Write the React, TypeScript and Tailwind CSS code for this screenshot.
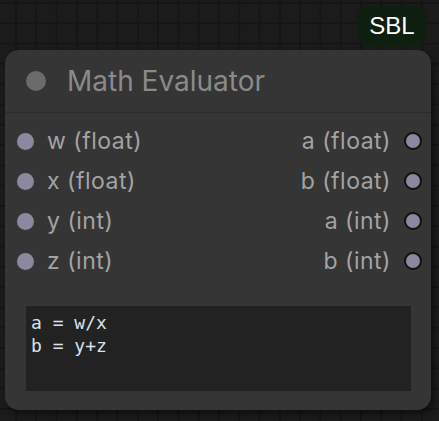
import React from 'react';

const inputs = ['w (float)', 'x (float)', 'y (int)', 'z (int)'];
const outputs = ['a (float)', 'b (float)', 'a (int)', 'b (int)'];

const App = () => {
    return (
        <div className="w-[439px] h-[421px] overflow-hidden flex flex-col pt-[6px] bg-[#1b1b1b] bg-[linear-gradient(to_right,#151515_2px,transparent_2px),linear-gradient(to_bottom,#151515_2px,transparent_2px)] bg-size-[20.3px_20.3px] bg-position-[15px_2px] font-['Inter',sans-serif]">
            {/* Badge */}
            <div className="self-end mr-[13px] w-[68px] h-[40px] rounded-[10px] bg-[#0e1f10] flex items-center justify-center text-white text-[24px] font-['Liberation_Sans',sans-serif]">
                SBL
            </div>

            {/* Node */}
            <div className="mt-[4px] ml-[5px] w-[426px] h-[360px] rounded-[14px] bg-[#353535] shadow-[3px_4px_6px_rgba(0,0,0,0.45)] flex flex-col">
                {/* Header */}
                <div className="h-[63px] border-b border-[#2b2b2b] flex items-center pl-[21px] gap-[21px] shrink-0">
                    <div className="w-[20px] h-[20px] rounded-full bg-[#6b6b6b]"></div>
                    <span className="text-[28px] text-[#8a8a8a] leading-none">Math Evaluator</span>
                </div>

                {/* Sockets */}
                <div className="flex justify-between pt-[8px] pl-[12px] pr-[9px]">
                    <div className="flex flex-col">
                        {inputs.map((label) => (
                            <div key={label} className="h-[40px] flex items-center gap-[13px]">
                                <div className="w-[17px] h-[17px] rounded-full bg-[#8a899f]"></div>
                                <span className="text-[23px] tracking-[0.5px] text-[#a3a3a3] leading-none">{label}</span>
                            </div>
                        ))}
                    </div>
                    <div className="flex flex-col items-end">
                        {outputs.map((label, i) => (
                            <div key={label + i} className="h-[40px] flex items-center gap-[13px]">
                                <span className="text-[23px] tracking-[0.5px] text-[#a3a3a3] leading-none">{label}</span>
                                <div className="w-[18px] h-[18px] rounded-full bg-[#8a899f] border-2 border-[#111111]"></div>
                            </div>
                        ))}
                    </div>
                </div>

                {/* Code */}
                <div className="mt-[25px] mx-[21px] mr-[20px] h-[85px] bg-[#222222] pt-[5px] pl-[5px] font-['DejaVu_Sans_Mono',monospace] text-[18px] leading-[23px] text-[#dbe0ea] whitespace-pre">
                    <div>a = w/x</div>
                    <div>b = y+z</div>
                </div>
            </div>
        </div>
    );
};

export default App;
